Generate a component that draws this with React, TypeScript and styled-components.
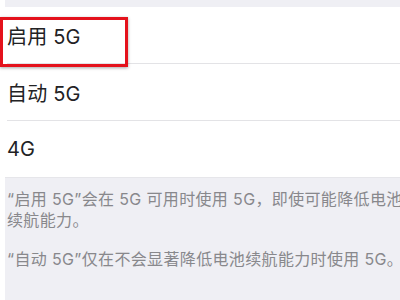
import styled, { createGlobalStyle } from "styled-components";

const GlobalStyle = createGlobalStyle`
  html, body {
    margin: 0;
    padding: 0;
    background: #ffffff;
  }
  body {
    font-family: Inter, "Noto Sans CJK SC", sans-serif;
    -webkit-font-smoothing: antialiased;
  }
`;

const options = ["启用 5G", "自动 5G", "4G"];

const App = () => {
  return (
    <>
      <GlobalStyle />
      <Screen>
        <TopStrip />
        <List>
          {options.map((label, i) => (
            <Row key={label} $last={i === options.length - 1}>
              <Label>{label}</Label>
            </Row>
          ))}
          <Highlight />
        </List>
        <Footer>
          <Note>
            <Line>“启用 5G”会在 5G 可用时使用 5G，即使可能降低电池</Line>
            <Line>续航能力。</Line>
          </Note>
          <Note>
            <Line>“自动 5G”仅在不会显著降低电池续航能力时使用 5G。</Line>
          </Note>
        </Footer>
      </Screen>
    </>
  );
};

const Screen = styled.div`
  width: 400px;
  height: 300px;
  overflow: hidden;
  display: flex;
  flex-direction: column;
  background: #ffffff;
`;

const TopStrip = styled.div`
  height: 7px;
  margin-left: 5px;
  background: #efeff4;
  flex-shrink: 0;
`;

const List = styled.div`
  position: relative;
  display: flex;
  flex-direction: column;
  flex-shrink: 0;
`;

const Row = styled.div<{ $last?: boolean }>`
  height: ${(p) => (p.$last ? "56px" : "57px")};
  display: flex;
  align-items: center;
  padding-left: 7px;
  border-bottom: ${(p) => (p.$last ? "none" : "1px solid #e3e3e6")};
  box-sizing: border-box;
  margin-left: ${(p) => (p.$last ? "0" : "7px")};
  & > span {
    margin-left: ${(p) => (p.$last ? "0" : "-7px")};
  }
`;

const Label = styled.span`
  font-size: 20px;
  color: #222224;
  letter-spacing: 0.2px;
`;

const Highlight = styled.div`
  position: absolute;
  left: 0;
  top: 10px;
  width: 128px;
  height: 50px;
  box-sizing: border-box;
  border: 3px solid #e4121c;
  box-shadow: 0 1px 3px rgba(0, 0, 0, 0.35);
`;

const Footer = styled.div`
  flex: 1;
  margin-left: 5px;
  padding: 11px 0 0 2px;
  background: #efeff4;
  border-top: 1px solid #e6e6ea;
  display: flex;
  flex-direction: column;
  gap: 18px;
`;

const Note = styled.div`
  display: flex;
  flex-direction: column;
`;

const Line = styled.div`
  font-size: 16px;
  line-height: 21px;
  letter-spacing: 0.35px;
  color: #88888c;
  white-space: nowrap;
`;

export default App;
